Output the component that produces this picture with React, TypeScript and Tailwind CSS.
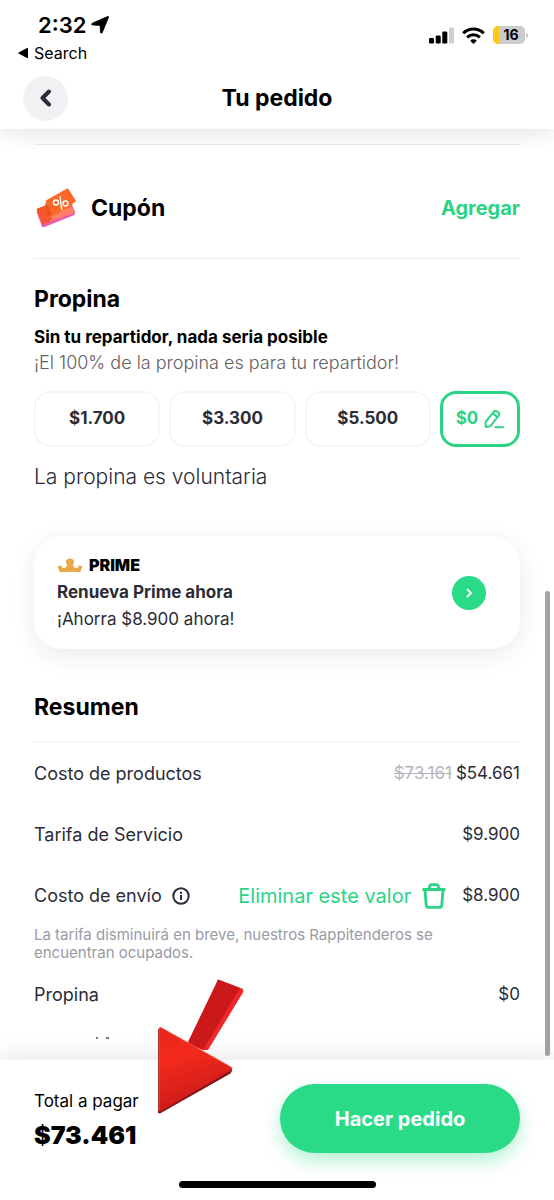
import type { ReactNode } from "react";

const tips = ["$1.700", "$3.300", "$5.500"];

function StatusBar() {
  return (
    <div className="flex justify-between pt-3 pr-[26px] pl-[18px]">
      <div>
        <div className="flex h-[26px] items-center gap-[5px] pl-5">
          <span className="text-[22px] font-semibold">2:32</span>
          <svg viewBox="0 0 18 18" className="size-[18px]" aria-hidden="true">
            <path d="M16.600.500c.7-.3 1.200.2.9.9L11.200 16.600c-.4.900-1.700.7-1.700-.3L9.100 9.400 1.600 9c-1.100 0-1.300-1.400-.3-1.800Z" stroke="#000" strokeWidth="0.800" />
          </svg>
        </div>
        <a href="#search" className="flex h-[29px] items-center gap-[6px] text-base">
          <svg viewBox="0 0 10 10" className="size-[10px]" aria-hidden="true">
            <path d="M10 .6v8.800c0 .6-.6.800-1 .6L.600 5.600c-.5-.3-.5-.9 0-1.200L9 0c.4-.2 1 0 1 .6Z" />
          </svg>
          Search
        </a>
      </div>
      <div className="flex h-[46px] items-center gap-2">
        <svg viewBox="0 0 25 17" className="h-[17px] w-[25px]" aria-hidden="true">
          <rect x="0" y="11" width="5" height="5.500" rx="1.300" />
          <rect x="6.700" y="8.500" width="5" height="8" rx="1.300" />
          <rect x="13.300" y="4.500" width="5" height="12" rx="1.300" />
          <rect x="20" y="0.500" width="5" height="16" rx="1.300" fill="#cfcfcf" />
        </svg>
        <svg viewBox="0 0 23 17" className="h-[17px] w-[23px]" fill="none" stroke="#000" strokeWidth="3" aria-hidden="true">
          <path d="M1.200 6.200a14.700 14.700 0 0 1 20.600 0" />
          <path d="M5.200 10.400a9 9 0 0 1 12.600 0" />
          <path d="M11.500 17 8.200 13.700a4.700 4.700 0 0 1 6.600 0Z" fill="#000" stroke="none" />
        </svg>
        <div className="flex items-center gap-px">
          <div className="flex h-[18px] w-8 items-center justify-center overflow-hidden rounded-[5px] bg-linear-to-r from-[#fcc917] from-[18%] to-[#cbcbcb] to-[18%] pl-1 text-sm font-bold">
            16
          </div>
          <div className="h-[5px] w-[2px] rounded-r-full bg-[#cbcbcb]" />
        </div>
      </div>
    </div>
  );
}

function Header() {
  return (
    <header className="relative z-10 bg-white shadow-[0_4px_22px_rgba(0,0,0,0.11)]">
      <StatusBar />
      <div className="grid h-[62px] grid-cols-[45px_1fr_45px] items-center px-[23px]">
        <button
          type="button"
          aria-label="Volver"
          className="flex size-[45px] items-center justify-center rounded-full bg-[#f0f1f3]"
        >
          <svg viewBox="0 0 12 18" className="h-[18px] w-3" fill="none" stroke="#2b2c36" strokeWidth="4" strokeLinecap="round" strokeLinejoin="round" aria-hidden="true">
            <path d="M9 2.500 2.500 9 9 15.500" />
          </svg>
        </button>
        <h1 className="text-center text-[23px] font-bold">Tu pedido</h1>
      </div>
    </header>
  );
}

function CouponIcon() {
  return (
    <svg viewBox="0 0 42 40" className="h-10 w-[42px]" aria-hidden="true">
      <path d="M2.500 24 8 38.500c.3.800 1 1 1.700.7L40.500 27l.5-3.500L35 11Z" fill="#e85bb0" />
      <path d="M2.600 21.500 31 8l9.500 15.500-.7 1.500L8.500 36.500Z" fill="#ff7f66" />
      <path d="M3.200 20.500 11 17.800l7.500 13.700-4.700 3-5.300 2L2.600 22Z" fill="#f4572c" />
      <path d="m14.500 18-3.600-1.600 1.300-1.800-.3-2.200L32.700.7c.8-.4 1.600-.2 2 .6l6.900 11.200c.4.700.2 1.300-.4 1.600l-2.400 1.200-.5 2.500-20.500 10.400-2.300-2.600-2.600.5Z" fill="#fb6828" />
      <path d="m11 16.500 2.500 11 4.300.2-3-9.600Z" fill="#ed4f25" />
      <g fill="none" stroke="#fff" strokeWidth="1.400">
        <circle cx="22" cy="14.500" r="2.500" />
        <circle cx="31.500" cy="15.500" r="2.500" />
        <path d="m26 8 1.800 14" />
      </g>
    </svg>
  );
}

function PrimeIcon() {
  return (
    <svg viewBox="0 0 26 15" className="h-[15px] w-[26px]" aria-hidden="true">
      <path
        d="M.5 8.200 5 7.400l-.5 1.800c1.500 1.300 4.200 1 5.100-.9.600-1.300.300-2.400-.4-3.500C8 2.900 10.400.600 13 .600s5 2.300 3.800 4.200c-.7 1.100-1 2.200-.4 3.500.9 1.900 3.600 2.200 5.100.9L21 7.400l4.500.8-2.400 6.100C16.500 13.400 9.500 13.400 2.900 14.300Z"
        fill="#eaa743"
      />
    </svg>
  );
}

function Row({ label, children }: { label: ReactNode; children: ReactNode }) {
  return (
    <div className="flex h-[61px] items-center justify-between text-[#2b2c36]">
      <dt className="flex items-center gap-[10px] text-lg">{label}</dt>
      <dd className="flex items-center text-[17px]">{children}</dd>
    </div>
  );
}

function Summary() {
  return (
    <section className="mt-[42px]">
      <h2 className="text-[23px] leading-8 font-bold">Resumen</h2>
      <dl className="mt-[18px] border-t-2 border-[#f7f7f9]">
        <Row label="Costo de productos">
          <del className="mr-1 text-[#b4b6bf]">$73.161</del> $54.661
        </Row>
        <Row label="Tarifa de Servicio">$9.900</Row>
        <Row
          label={
            <>
              Costo de envío
              <svg viewBox="0 0 18 18" className="size-[18px]" fill="none" stroke="#2b2c36" strokeWidth="2" aria-hidden="true">
                <circle cx="9" cy="9" r="7.700" />
                <path d="M9 8v5M9 4.800v2" />
              </svg>
            </>
          }
        >
          <button type="button" className="mr-4 flex items-center gap-[11px] text-xl text-[#2bd485]">
            Eliminar este valor
            <svg viewBox="0 0 24 26" className="h-[26px] w-6" fill="none" stroke="currentColor" strokeWidth="2.800" strokeLinejoin="round" aria-hidden="true">
              <path d="M.5 6.500h23M7.500 6V4.200c0-1.500.7-2.500 2.200-2.500h4.600c1.500 0 2.200 1 2.200 2.500V6M3 7l1.200 14.800c.1 1.500 1 2.600 2.600 2.600h10.400c1.600 0 2.500-1.100 2.600-2.600L21 7" />
            </svg>
          </button>
          $8.900
        </Row>
      </dl>
      <p className="max-w-[410px] pb-[2px] text-[15px] leading-[18px] text-[#989aa6]">
        La tarifa disminuirá en breve, nuestros Rappitenderos se encuentran ocupados.
      </p>
      <dl>
        <Row label="Propina">$0</Row>
      </dl>
    </section>
  );
}

function Arrow() {
  return (
    <svg viewBox="0 0 87 136" className="absolute -top-[82px] left-[157px] h-[136px] w-[87px]" aria-hidden="true">
      <defs>
        <linearGradient id="head" x1="0" y1="0" x2="0.3" y2="1">
          <stop offset="0" stopColor="#e5251c" />
          <stop offset="0.400" stopColor="#f32a1b" />
          <stop offset="1" stopColor="#c9191b" />
        </linearGradient>
      </defs>
      <path d="M61 1.500 86 11l.3 3L51 72l-6 0Z" fill="#f0282b" />
      <path d="M61 1.500 83 10 46 72 30 66Z" fill="#cb181b" />
      <path d="m1 51 0 84 2 .5L73.500 95.500l2-3.500Z" fill="#85161b" />
      <path d="M2 51.500c0-2 1-2.500 2.500-1.700L74 89c1.500 1 1.500 2.400 0 3.300L4.500 132.700 2 133Z" fill="url(#head)" />
      <path d="M2 133V51.500c0-2 1-2.500 2.500-1.700L74 89" fill="none" stroke="#ff5344" strokeWidth="0.800" />
    </svg>
  );
}

function Footer() {
  return (
    <footer className="relative z-10 bg-white px-[34px] pt-6 pb-3 shadow-[0_-4px_24px_rgba(0,0,0,0.1)]">
      <Arrow />
      <div className="flex items-center justify-between">
        <div>
          <p className="text-[17px] leading-8">Total a pagar</p>
          <p className="text-[25px] leading-9 font-black">$73.461</p>
        </div>
        <button
          type="button"
          className="h-[69px] w-60 rounded-full bg-[#29da87] text-xl font-bold text-white shadow-[0_8px_18px_rgba(41,218,135,0.35)]"
        >
          Hacer pedido
        </button>
      </div>
      <div className="mx-auto mt-7 h-[7px] w-[197px] rounded-full bg-black" />
    </footer>
  );
}

export default function App() {
  return (
    <div className="flex h-screen flex-col bg-white font-['Inter',sans-serif] text-black">
      <Header />
      <div className="relative min-h-0 flex-1">
        <main className="h-full overflow-y-auto px-[34px] pt-[15px] [scrollbar-width:none]">
          <section className="flex items-center border-y border-[#ebebed] pt-[43px] pb-[30px]">
            <CouponIcon />
            <h2 className="ml-[15px] text-[23px] leading-8 font-bold">Cupón</h2>
            <button type="button" className="ml-auto text-xl font-bold text-[#2bd485]">
              Agregar
            </button>
          </section>

          <section className="pt-6">
            <h2 className="text-[23px] leading-8 font-bold">Propina</h2>
            <p className="mt-[10px] text-[17px] leading-[25px] font-bold">Sin tu repartidor, nada seria posible</p>
            <p className="text-lg leading-[25px] font-light text-[#65605f]">
              ¡El 100% de la propina es para tu repartidor!
            </p>
            <div className="mt-4 flex gap-[9px] text-[17px] font-bold">
              {tips.map((tip) => (
                <button
                  key={tip}
                  type="button"
                  className="h-14 flex-1 rounded-2xl border-2 border-[#f6f6f9] text-[#2b2c36]"
                >
                  {tip}
                </button>
              ))}
              <button
                type="button"
                className="flex h-14 w-20 items-center justify-center gap-[6px] rounded-2xl border-[3px] border-[#2bd485] text-[#2bd485]"
              >
                $0
                <svg viewBox="0 0 20 20" className="size-5" fill="none" stroke="currentColor" strokeWidth="2" strokeLinecap="round" strokeLinejoin="round" aria-hidden="true">
                  <path d="M2 12.500 9.900 2.700c.8-1 2-1.100 3-.4l1.500 1.200c1 .8 1.100 2 .4 3L7.200 16.200c-.5.700-1.200 1-2 1.200l-3.300.5-.4-3.400c-.1-.8.100-1.400.5-2ZM9 4.500l4.500 3.700M11.500 18.300h7.500" />
                </svg>
              </button>
            </div>
            <p className="mt-4 text-[21px] leading-7 font-light text-[#2b2c36]">La propina es voluntaria</p>
          </section>

          <section className="mt-[45px] flex items-center justify-between rounded-[28px] px-[23px] py-4 pr-[34px] text-[17px] leading-[27px] text-[#2b2c36] shadow-[0_6px_24px_rgba(30,30,60,0.09)]">
            <div>
              <div className="flex items-center gap-[6px]">
                <PrimeIcon />
                <span className="text-base leading-[27px] font-black text-black">PRIME</span>
              </div>
              <p className="font-bold">Renueva Prime ahora</p>
              <p>¡Ahorra $8.900 ahora!</p>
            </div>
            <button
              type="button"
              aria-label="Renovar Prime"
              className="flex size-[34px] items-center justify-center rounded-full bg-[#29da87]"
            >
              <svg viewBox="0 0 8 10" className="h-[10px] w-2" fill="none" stroke="#fff" strokeWidth="2" aria-hidden="true">
                <path d="m2 1 4 4-4 4" />
              </svg>
            </button>
          </section>

          <Summary />
          <svg viewBox="0 0 14 2" className="mt-3 ml-[62px] h-[2px] w-[14px]" fill="#77777d" aria-hidden="true">
            <rect x="0" width="2" height="2" />
            <rect x="10" width="3" height="2" />
          </svg>
        </main>
        <div className="absolute right-1 bottom-1 h-1/2 w-[5px] rounded-full bg-[#a3a3a3]" />
      </div>
      <Footer />
    </div>
  );
}
